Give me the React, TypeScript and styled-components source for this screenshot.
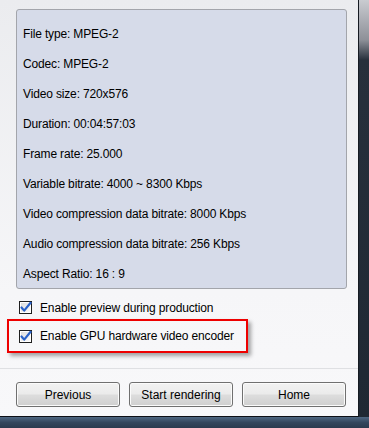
import styled, { createGlobalStyle } from "styled-components";

const GlobalStyle = createGlobalStyle`
  html, body {
    margin: 0;
    padding: 0;
    width: 369px;
    height: 428px;
    overflow: hidden;
    background: #1e2a38;
  }
  * { box-sizing: border-box; }
`;

const Window = styled.div`
  display: flex;
  flex-direction: column;
  width: 369px;
  height: 428px;
`;

const Body = styled.div`
  display: flex;
  flex: 1;
`;

const Content = styled.div`
  width: 359px;
  height: 417px;
  display: flex;
  flex-direction: column;
  background: linear-gradient(to bottom, #ebecef, #f6f6f8 70%, #f8f8fa);
  border-right: 1px solid #161b22;
  border-bottom: 1px solid #0d1016;
  font-family: "Liberation Sans", Arial, sans-serif;
  font-size: 12px;
  letter-spacing: -0.15px;
  color: #000;
`;

const Frame = styled.div`
  flex: 1;
  background: linear-gradient(to bottom, #c9cbd0 0px, #8d9098 40px, #27303c 60px, #1f2833 100%);
`;

const BottomFrame = styled.div`
  height: 11px;
  background: linear-gradient(to bottom, #4e6782, #33465d 50%, #2a3a4e);
`;

const InfoPanel = styled.div`
  margin: 9px 11px 0 16px;
  height: 280px;
  overflow: hidden;
  flex-shrink: 0;
  border: 1px solid #a3a5ab;
  border-radius: 3px;
  background: #d6dbe9;
  padding: 9px 6px 0 6px;
  display: flex;
  flex-direction: column;
`;

const InfoRow = styled.div`
  height: 30px;
  flex-shrink: 0;
  line-height: 30px;
  white-space: nowrap;
`;

const Options = styled.div`
  display: flex;
  flex-direction: column;
  padding: 8px 0 0 7px;
`;

const CheckRow = styled.div<{ $highlight?: boolean }>`
  display: flex;
  align-items: center;
  gap: 8px;
  width: 241px;
  height: ${(p) => (p.$highlight ? "34px" : "21px")};
  padding-left: ${(p) => (p.$highlight ? "10px" : "12px")};
  border: ${(p) => (p.$highlight ? "2px solid #ee0000" : "none")};
  box-shadow: ${(p) => (p.$highlight ? "3px 3px 4px rgba(0,0,0,0.35)" : "none")};
  margin-top: ${(p) => (p.$highlight ? "1px" : "0")};
`;

const Separator = styled.div`
  margin-top: 15px;
  height: 1px;
  background: #dfe0e3;
`;

const ButtonBar = styled.div`
  display: flex;
  gap: 9px;
  padding: 13px 0 0 16px;
`;

const Button = styled.button`
  width: 104px;
  height: 25px;
  border: 1px solid #707070;
  border-radius: 3px;
  background: linear-gradient(to bottom, #f2f2f2 0%, #ebebeb 48%, #dddddd 52%, #cfcfcf 100%);
  box-shadow: inset 0 0 0 1px #fbfbfb;
  font-family: "Liberation Sans", Arial, sans-serif;
  font-size: 12px;
  color: #000;
  padding: 0;
`;

function CheckBox() {
  return (
    <svg width="13" height="13" viewBox="0 0 13 13">
      <defs>
        <linearGradient id="cbg" x1="0" y1="0" x2="1" y2="1">
          <stop offset="0" stopColor="#dcdcdc" />
          <stop offset="1" stopColor="#fbfbfb" />
        </linearGradient>
      </defs>
      <rect x="0.5" y="0.5" width="12" height="12" fill="#fff" stroke="#1f1f1f" />
      <rect x="2" y="2" width="9" height="9" fill="url(#cbg)" />
      <path d="M2.5 6.5 L5.2 9.6 L11.6 1.8" fill="none" stroke="#2b63c9" strokeWidth="2.2" strokeLinecap="round" strokeLinejoin="round" />
    </svg>
  );
}

const info = [
  "File type: MPEG-2",
  "Codec: MPEG-2",
  "Video size: 720x576",
  "Duration: 00:04:57:03",
  "Frame rate: 25.000",
  "Variable bitrate: 4000 ~ 8300 Kbps",
  "Video compression data bitrate: 8000 Kbps",
  "Audio compression data bitrate: 256 Kbps",
  "Aspect Ratio: 16 : 9",
];

export default function App() {
  return (
    <Window>
      <GlobalStyle />
      <Body>
        <Content>
          <InfoPanel>
            {info.map((line) => (
              <InfoRow key={line}>{line}</InfoRow>
            ))}
          </InfoPanel>
          <Options>
            <CheckRow>
              <CheckBox />
              <span>Enable preview during production</span>
            </CheckRow>
            <CheckRow $highlight>
              <CheckBox />
              <span>Enable GPU hardware video encoder</span>
            </CheckRow>
          </Options>
          <Separator />
          <ButtonBar>
            <Button>Previous</Button>
            <Button>Start rendering</Button>
            <Button>Home</Button>
          </ButtonBar>
        </Content>
        <Frame />
      </Body>
      <BottomFrame />
    </Window>
  );
}
